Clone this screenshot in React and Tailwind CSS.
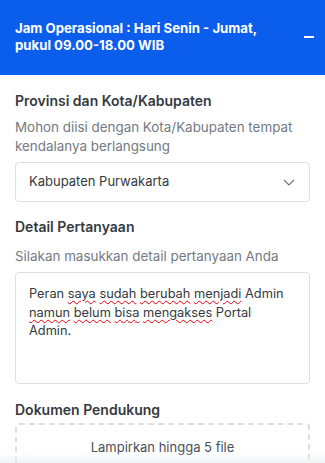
import React, { useState } from 'react';

const Squiggle = ({ children }) => (
  <span className="underline decoration-wavy decoration-red-600 decoration-1 underline-offset-2">{children}</span>
);

const App = () => {
  const [kota] = useState('Kabupaten Purwakarta');

  return (
    <div className="w-[325px] h-[463px] overflow-hidden bg-white relative" style={{ fontFamily: 'Inter, "Noto Sans", sans-serif' }}>
      {/* Header */}
      <div className="bg-[#0b5eec] h-[75px] flex items-center justify-between pl-[15px] pr-[11px] pb-[2px]">
        <p className="text-white font-bold text-[13.2px] leading-[17px] w-[260px]">
          Jam Operasional : Hari Senin - Jumat, pukul 09.00-18.00 WIB
        </p>
        <span className="block w-[10px] h-[2px] bg-white"></span>
      </div>

      <div className="px-[15px] pt-[16px]">
        {/* Provinsi */}
        <h3 className="text-[14px] font-semibold text-[#343a40] leading-[20px]">Provinsi dan Kota/Kabupaten</h3>
        <p className="text-[13.4px] text-[#737a82] leading-[19px] mt-[7px]">
          Mohon diisi dengan Kota/Kabupaten tempat kendalanya berlangsung
        </p>
        <div className="mt-[6px] h-[40px] border border-[#dcdfe3] rounded-[4px] flex items-center justify-between pl-[13px] pr-[14px]">
          <span className="text-[13px] text-[#343a40]">{kota}</span>
          <svg width="12" height="7" viewBox="0 0 12 7" fill="none" stroke="#6c757d" strokeWidth="1.2">
            <path d="M1 1l5 5 5-5" />
          </svg>
        </div>

        {/* Detail */}
        <h3 className="mt-[15px] text-[14px] font-semibold text-[#343a40] leading-[20px]">Detail Pertanyaan</h3>
        <p className="text-[13.4px] text-[#737a82] leading-[19px] mt-[10px]">Silakan masukkan detail pertanyaan Anda</p>
        <div className="mt-[6px] h-[112px] border border-[#dcdfe3] rounded-[4px] px-[13px] pt-[12px]">
          <p className="text-[12.8px] text-[#343a40] leading-[18.5px]">
            Peran <Squiggle>saya</Squiggle> <Squiggle>sudah</Squiggle> <Squiggle>berubah</Squiggle> <Squiggle>menjadi</Squiggle> Admin
            <br />
            <Squiggle>namun</Squiggle> <Squiggle>belum</Squiggle> <Squiggle>bisa</Squiggle> <Squiggle>mengakses</Squiggle> Portal
            <br />
            Admin.
          </p>
        </div>

        {/* Dokumen */}
        <h3 className="mt-[16px] text-[14px] font-semibold text-[#343a40] leading-[20px]">Dokumen Pendukung</h3>
        <div className="mt-[3px] h-[60px] border-2 border-dashed border-[#dcdfe3] rounded-[4px] flex justify-center pt-[13px]">
          <span className="text-[13px] text-[#495057]">Lampirkan hingga 5 file</span>
        </div>
      </div>

      <div className="absolute left-0 right-0 bottom-0 h-[10px] bg-gradient-to-b from-transparent to-[#e9ecef]/70"></div>
    </div>
  );
};

export default App;
